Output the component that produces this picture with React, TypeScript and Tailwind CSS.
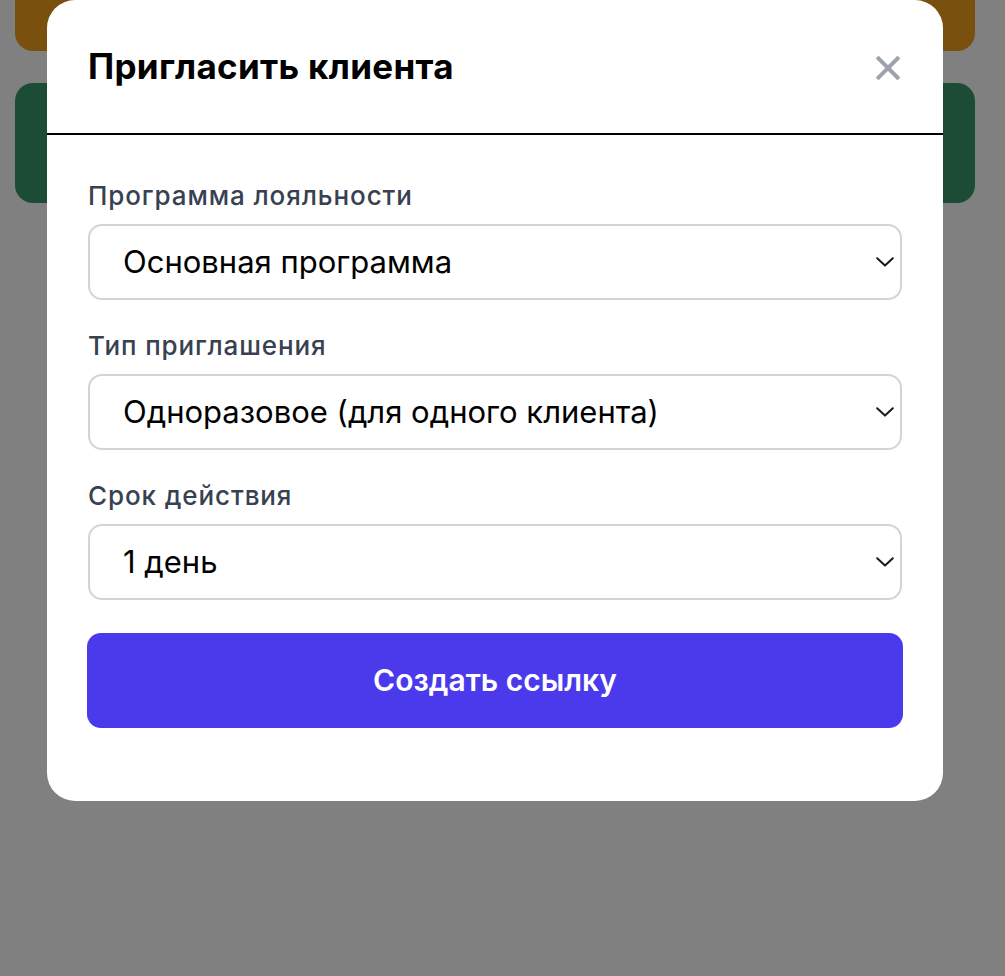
import React from "react";

function Chevron() {
  return (
    <svg width="18" height="10" viewBox="0 0 18 10" fill="none" className="shrink-0">
      <path d="M1.2 1.2 L9 8.6 L16.8 1.2" stroke="#1a1a1a" strokeWidth="2" strokeLinecap="round" strokeLinejoin="round" />
    </svg>
  );
}

function Field({ label, value }: { label: string; value: string }) {
  return (
    <div className="flex flex-col">
      <div className="text-[26px] leading-[32px] font-medium tracking-[0.9px] text-[#374151]">{label}</div>
      <div className="mt-[12px] h-[76px] rounded-[14px] border-2 border-[#d1d5db] bg-white flex items-center justify-between pl-[33px] pr-[6px]">
        <span className="text-[31px] text-black">{value}</span>
        <Chevron />
      </div>
    </div>
  );
}

export default function App() {
  return (
    <div
      className="relative w-full h-[976px] overflow-hidden bg-[#808080]"
      style={{ fontFamily: "Inter, 'Noto Sans', sans-serif" }}
    >
      <div className="w-[990px] px-[15px] flex flex-col gap-[32px]">
        <div className="h-[51px] rounded-b-[18px] bg-[#7a500f]" />
        <div className="h-[120px] rounded-[18px] bg-[#1d4c36]" />
      </div>

      <div className="absolute left-[47px] top-0 w-[896px] h-[801px] bg-white rounded-[28px] flex flex-col">
        <div className="h-[135px] flex items-center justify-between pl-[41px] pr-[43px] border-b-2 border-black">
          <h2 className="text-[35px] font-bold text-black tracking-[0.3px]">Пригласить клиента</h2>
          <svg width="24" height="24" viewBox="0 0 24 24" fill="none" className="mt-[3px]">
            <path d="M2.5 2.5 L21.5 21.5 M21.5 2.5 L2.5 21.5" stroke="#9ca3af" strokeWidth="4" strokeLinecap="square" />
          </svg>
        </div>
        <div className="px-[41px] pt-[45px] flex flex-col gap-[30px]">
          <Field label="Программа лояльности" value="Основная программа" />
          <Field label="Тип приглашения" value="Одноразовое (для одного клиента)" />
          <Field label="Срок действия" value="1 день" />
        </div>
        <div className="px-[40px] mt-[33px]">
          <button className="w-full h-[95px] rounded-[14px] bg-[#4b3aec] text-white text-[30px] font-semibold">
            Создать ссылку
          </button>
        </div>
      </div>
    </div>
  );
}
